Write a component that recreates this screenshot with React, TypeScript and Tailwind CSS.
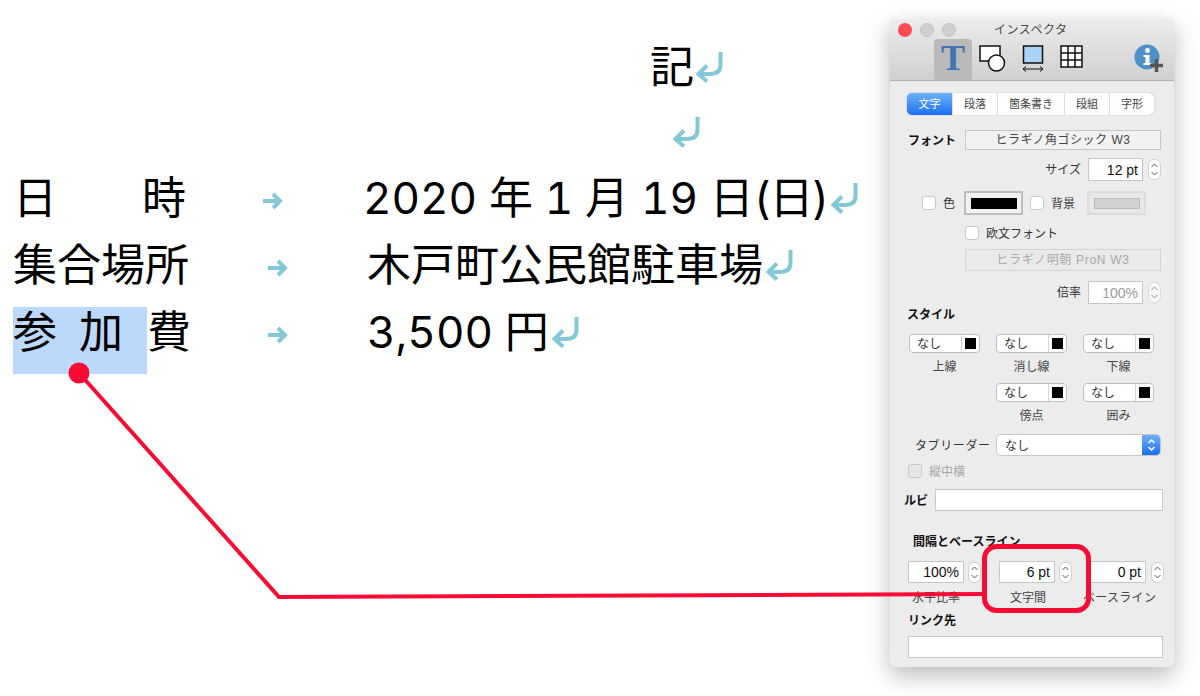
import React from "react";

const JP = "font-['Liberation_Sans','Noto_Sans_CJK_JP',sans-serif]";
const DOC = "font-['Inter','Noto_Sans_CJK_JP',sans-serif]";

function Ret({ className = "" }: { className?: string }) {
  return (
    <svg width="28" height="32" viewBox="0 0 28 32" className={`shrink-0 ${className}`} fill="none" stroke="#83c8d6" strokeWidth="4">
      <path d="M25.5 1 V14 Q25.5 23 15 23 H4" />
      <path d="M12 14.5 L3.5 23 L12 30.5" />
    </svg>
  );
}

function TabArrow() {
  return (
    <svg width="20" height="18" viewBox="0 0 20 18" fill="none" stroke="#83c8d6" strokeWidth="4">
      <path d="M0 9 H16" />
      <path d="M10 2 L17 9 L10 16" />
    </svg>
  );
}

function Stepper({ faded = false, className = "" }: { faded?: boolean; className?: string }) {
  return (
    <div className={`w-[13px] h-[21px] rounded-[6px] bg-white border border-[#d0d0d0] flex items-center justify-center ${faded ? "opacity-60" : ""} ${className}`}>
      <svg width="9" height="15" viewBox="0 0 9 15" fill="none" stroke="#555" strokeWidth="1">
        <path d="M1.5 5 L4.5 2 L7.5 5" />
        <path d="M1.5 10 L4.5 13 L7.5 10" />
      </svg>
    </div>
  );
}

function Check({ faded = false }: { faded?: boolean }) {
  return <div className={`w-[14px] h-[14px] rounded-[3px] border border-[#c8c8c8] shrink-0 ${faded ? "bg-[#e6e6e6]" : "bg-white"}`} />;
}

function NumInput({ value, w = "w-[56px]", faded = false }: { value: string; w?: string; faded?: boolean }) {
  return (
    <div className={`${w} h-full bg-white border border-[#c6c6c6] flex items-center justify-end pr-[4px] pt-[1px] text-[14px] ${faded ? "text-[#9a9a9a]" : "text-[#111]"}`}>
      {value}
    </div>
  );
}

function StyleBox({ className = "" }: { className?: string }) {
  return (
    <div className={`w-[71px] h-[19px] bg-white rounded-[4px] border border-[#bdbdbd] flex items-center text-[12px] text-[#333] ${className}`}>
      <span className="flex-1 pl-[7px] pt-[1px]">なし</span>
      <div className="w-[18px] h-full border-l border-[#d4d4d4] flex items-center justify-center">
        <div className="w-[11px] h-[11px] bg-black" />
      </div>
    </div>
  );
}

function Cap({ w, children }: { w: string; children: React.ReactNode }) {
  return <div className={`${w} shrink-0 text-center text-[12px] leading-[16px] text-[#444] whitespace-nowrap`}>{children}</div>;
}

function Swatch({ disabled = false }: { disabled?: boolean }) {
  return (
    <div className={`w-[59px] h-[24px] border-2 flex items-center justify-center ${disabled ? "border-[#dcdcdc] bg-[#e8e8e8]" : "border-[#bdbdbd] bg-[#f2f2f2]"}`}>
      <div className={`w-[46px] h-[11px] ${disabled ? "bg-[#d2d2d2] border border-[#bcbcbc]" : "bg-black"}`} />
    </div>
  );
}

function Inspector() {
  const tabs: [string, string][] = [["段落", "w-[45px]"], ["箇条書き", "w-[67px]"], ["段組", "w-[45px]"], ["字形", "flex-1"]];
  return (
    <div className={`w-[284px] h-[648px] mt-[19px] mr-[26px] shrink-0 rounded-[5px] overflow-hidden bg-[#ececec] shadow-[0_8px_24px_rgba(0,0,0,0.28)] ${JP}`}>
      <div className="h-[62px] relative bg-gradient-to-b from-[#ececec] to-[#d0d0d0] border-b border-[#b4b4b4]">
        <div className="h-[20px] flex items-center pl-[8px] pt-[1px] gap-[8px]">
          <div className="w-[14px] h-[14px] rounded-full bg-[#fb4a52]" />
          <div className="w-[14px] h-[14px] rounded-full bg-[#cfcfcf] border border-[#c2c2c2]" />
          <div className="w-[14px] h-[14px] rounded-full bg-[#cfcfcf] border border-[#c2c2c2]" />
          <div className="ml-[30px] text-[12px] text-[#4a4a4a] tracking-[0.5px]">インスペクタ</div>
        </div>
        <div className="flex items-start pl-[44px]">
          <div className="w-[38px] h-[41px] bg-[#bababa] rounded-t-[4px] flex items-start justify-center">
            <span className="font-['Liberation_Serif',serif] font-bold text-[36px] leading-[38px] text-[#3f74b0]">T</span>
          </div>
          <svg width="28" height="28" viewBox="0 0 28 28" className="ml-[7px] mt-[6px]" fill="none" stroke="#111" strokeWidth="1.5">
            <rect x="1" y="1" width="20" height="15" fill="#fff" />
            <circle cx="17.5" cy="18" r="8" fill="#fff" />
          </svg>
          <svg width="22" height="27" viewBox="0 0 22 27" className="ml-[15px] mt-[6px]" fill="none" stroke="#111" strokeWidth="1.5">
            <rect x="1.5" y="1" width="19" height="17" fill="#a9d2f8" />
            <path d="M1 24 H21 M4 21.5 L1 24 L4 26.5 M18 21.5 L21 24 L18 26.5" strokeWidth="1" />
          </svg>
          <svg width="23" height="23" viewBox="0 0 23 23" className="ml-[16px] mt-[6px]" fill="#fff" stroke="#111" strokeWidth="1.5">
            <rect x="1" y="1" width="21" height="21" />
            <path d="M8 1 V22 M15 1 V22 M1 8 H22 M1 15 H22" fill="none" />
          </svg>
          <svg width="30" height="29" viewBox="0 0 30 29" className="ml-[51px] mt-[5px]">
            <circle cx="13" cy="13" r="12.5" fill="#4f8fca" />
            <circle cx="13.5" cy="6.5" r="2.4" fill="#fff" />
            <path d="M9.5 11 H15.5 V19 H17.5 V21 H9.5 V19 H11.5 V13 H9.5 Z" fill="#fff" />
            <path d="M22.5 15 V28 M16 21.5 H29" stroke="#555" strokeWidth="3.6" fill="none" />
          </svg>
        </div>
      </div>

      <div className="mt-[12px] ml-[17px] w-[247px] h-[22px] flex rounded-[5px] bg-white shadow-[0_0_1px_rgba(0,0,0,0.5)] overflow-hidden text-[11px] text-[#444]">
        <div className="w-[45px] flex items-center justify-center text-white bg-gradient-to-b from-[#6cb0fb] to-[#1d6ff0]">文字</div>
        {tabs.map(([t, w]) => (
          <div key={t} className={`${w} flex items-center justify-center border-l border-[#dedede]`}>{t}</div>
        ))}
      </div>

      <div className="mt-[15px] ml-[18px] h-[20px] flex items-center">
        <div className="w-[57px] text-[12px] pt-[1px] font-bold text-[#111]">フォント</div>
        <div className="w-[196px] h-full bg-[#f2f2f2] border border-[#c6c6c6] flex items-center justify-center text-[12px] tracking-[0.5px] text-[#444]">ヒラギノ角ゴシック W3</div>
      </div>

      <div className="mt-[8px] h-[23px] flex items-center justify-end pr-[13px]">
        <span className="text-[12px] pt-[1px] text-[#333] mr-[7px]">サイズ</span>
        <NumInput value="12 pt" w="w-[55px]" />
        <Stepper className="ml-[5px]" />
      </div>

      <div className="mt-[10px] ml-[32px] h-[24px] flex items-center">
        <Check />
        <span className="ml-[7px] w-[21px] pt-[1px] text-[12px] text-[#333]">色</span>
        <Swatch />
        <div className="w-[7px]" />
        <Check />
        <span className="ml-[7px] w-[36px] pt-[1px] text-[12px] text-[#444]">背景</span>
        <Swatch disabled />
      </div>

      <div className="mt-[11px] ml-[75px] h-[14px] flex items-center">
        <Check />
        <span className="ml-[7px] pt-[1px] text-[12px] text-[#333]">欧文フォント</span>
      </div>

      <div className="mt-[9px] ml-[75px] w-[196px] h-[22px] bg-[#eaeaea] border border-[#d2d2d2] flex items-center justify-center text-[12px] tracking-[0.7px] text-[#a8a8a8]">ヒラギノ明朝 ProN W3</div>

      <div className="mt-[10px] h-[23px] flex items-center justify-end pr-[13px]">
        <span className="text-[12px] pt-[1px] text-[#333] mr-[7px]">倍率</span>
        <NumInput value="100%" w="w-[55px]" faded />
        <Stepper faded className="ml-[5px]" />
      </div>

      <div className="mt-[3px] ml-[17px] h-[16px] text-[12px] leading-[16px] font-bold text-[#111]">スタイル</div>

      <div className="mt-[11px] ml-[19px] flex gap-[16px]">
        <StyleBox /><StyleBox /><StyleBox />
      </div>
      <div className="mt-[6px] ml-[19px] flex gap-[16px]">
        <Cap w="w-[71px]">上線</Cap><Cap w="w-[71px]">消し線</Cap><Cap w="w-[71px]">下線</Cap>
      </div>
      <div className="mt-[8px] ml-[106px] flex gap-[16px]">
        <StyleBox /><StyleBox />
      </div>
      <div className="mt-[6px] ml-[106px] flex gap-[16px]">
        <Cap w="w-[71px]">傍点</Cap><Cap w="w-[71px]">囲み</Cap>
      </div>

      <div className="mt-[10px] ml-[25px] h-[22px] flex items-center">
        <span className="w-[81px] pt-[1px] text-[12px] tracking-[0.6px] whitespace-nowrap text-[#333]">タブリーダー</span>
        <div className="w-[165px] h-full rounded-[5px] bg-white border border-[#c8c8c8] flex items-center overflow-hidden text-[12px] text-[#333]">
          <span className="flex-1 pl-[8px] pt-[1px]">なし</span>
          <div className="w-[18px] h-full bg-gradient-to-b from-[#6cb0fb] to-[#1d6ff0] flex items-center justify-center">
            <svg width="9" height="14" viewBox="0 0 9 14" fill="none" stroke="#fff" strokeWidth="1.5">
              <path d="M1.5 5 L4.5 2 L7.5 5 M1.5 9 L4.5 12 L7.5 9" />
            </svg>
          </div>
        </div>
      </div>

      <div className="mt-[8px] ml-[18px] h-[14px] flex items-center">
        <Check faded />
        <span className="ml-[7px] pt-[1px] text-[12px] text-[#a8a8a8]">縦中横</span>
      </div>

      <div className="mt-[11px] ml-[14px] h-[22px] flex items-center">
        <span className="w-[31px] pt-[1px] text-[12px] font-bold text-[#111]">ルビ</span>
        <div className="w-[228px] h-full bg-white border border-[#c6c6c6]" />
      </div>

      <div className="mt-[23px] ml-[23px] h-[16px] text-[12px] leading-[17px] font-bold text-[#111]">間隔とベースライン</div>

      <div className="mt-[11px] ml-[18px] h-[22px] flex items-center">
        <NumInput value="100%" />
        <Stepper className="ml-[4px]" />
        <div className="w-[18px]" />
        <NumInput value="6 pt" />
        <Stepper className="ml-[4px]" />
        <div className="w-[18px]" />
        <NumInput value="0 pt" />
        <Stepper className="ml-[5px]" />
      </div>

      <div className="mt-[7px] ml-[18px] flex">
        <Cap w="w-[56px]">水平比率</Cap>
        <Cap w="w-[128px]">文字間</Cap>
        <div className="ml-[-9px] text-[12px] leading-[16px] text-[#444] tracking-[0.3px] whitespace-nowrap">ベースライン</div>
      </div>

      <div className="mt-[7px] ml-[18px] h-[16px] text-[12px] leading-[16px] font-bold text-[#111]">リンク先</div>
      <div className="mt-[7px] ml-[18px] w-[255px] h-[22px] bg-white border border-[#c6c6c6]" />
    </div>
  );
}

function Row({ label, arrowGap, value, valueGap }: { label: React.ReactNode; arrowGap: string; value: React.ReactNode; valueGap: string }) {
  return (
    <div className="h-[67px] flex items-center">
      {label}
      <div className={`${arrowGap} mt-[6px]`}><TabArrow /></div>
      <span className={`${valueGap} whitespace-nowrap tabular-nums`}>{value}</span>
      <Ret className="ml-[2px]" />
    </div>
  );
}

export default function App() {
  return (
    <div className={`relative w-[1200px] h-[696px] overflow-hidden bg-white flex ${JP}`}>
      <div className={`flex-1 pt-[33px] text-[44px] text-black ${DOC}`}>
        <div className="h-[67px] flex items-center pl-[650px]">
          <span>記</span>
          <Ret className="ml-[1px]" />
        </div>
        <div className="h-[64px] flex items-center pl-[672px]">
          <Ret />
        </div>
        <Row
          label={<div className="w-[173px] ml-[13px] flex justify-between"><span>日</span><span>時</span></div>}
          arrowGap="ml-[77px]"
          value={<>2020 年 1 月 19 日<span className="tracking-[-1.5px]">(日)</span></>}
          valueGap="ml-[80px]"
        />
        <Row
          label={<span className="ml-[13px] w-[176px]">集合場所</span>}
          arrowGap="ml-[79px]"
          value="木戸町公民館駐車場"
          valueGap="ml-[79px]"
        />
        <Row
          label={
            <div className="ml-[13px] w-[178px] flex items-center">
              <span className="w-[134px] shrink-0 h-[67px] mt-[18px] pb-[18px] bg-[#bcd9fb] flex items-center whitespace-nowrap">
                <span className="mr-[22px]">参</span>
                <span>加</span>
              </span>
              <span>費</span>
            </div>
          }
          arrowGap="ml-[77px]"
          value="3,500 円"
          valueGap="ml-[79px]"
        />
      </div>
      <Inspector />
      <svg width="1200" height="696" viewBox="0 0 1200 696" className="absolute inset-0 pointer-events-none" fill="none" stroke="#f80c34">
        <circle cx="79" cy="373" r="10.5" fill="#f80c34" stroke="none" />
        <path d="M79 373 L279 597 L984 594" strokeWidth="4" />
        <rect x="984.5" y="546.5" width="104" height="64" rx="12" strokeWidth="5" />
      </svg>
    </div>
  );
}
